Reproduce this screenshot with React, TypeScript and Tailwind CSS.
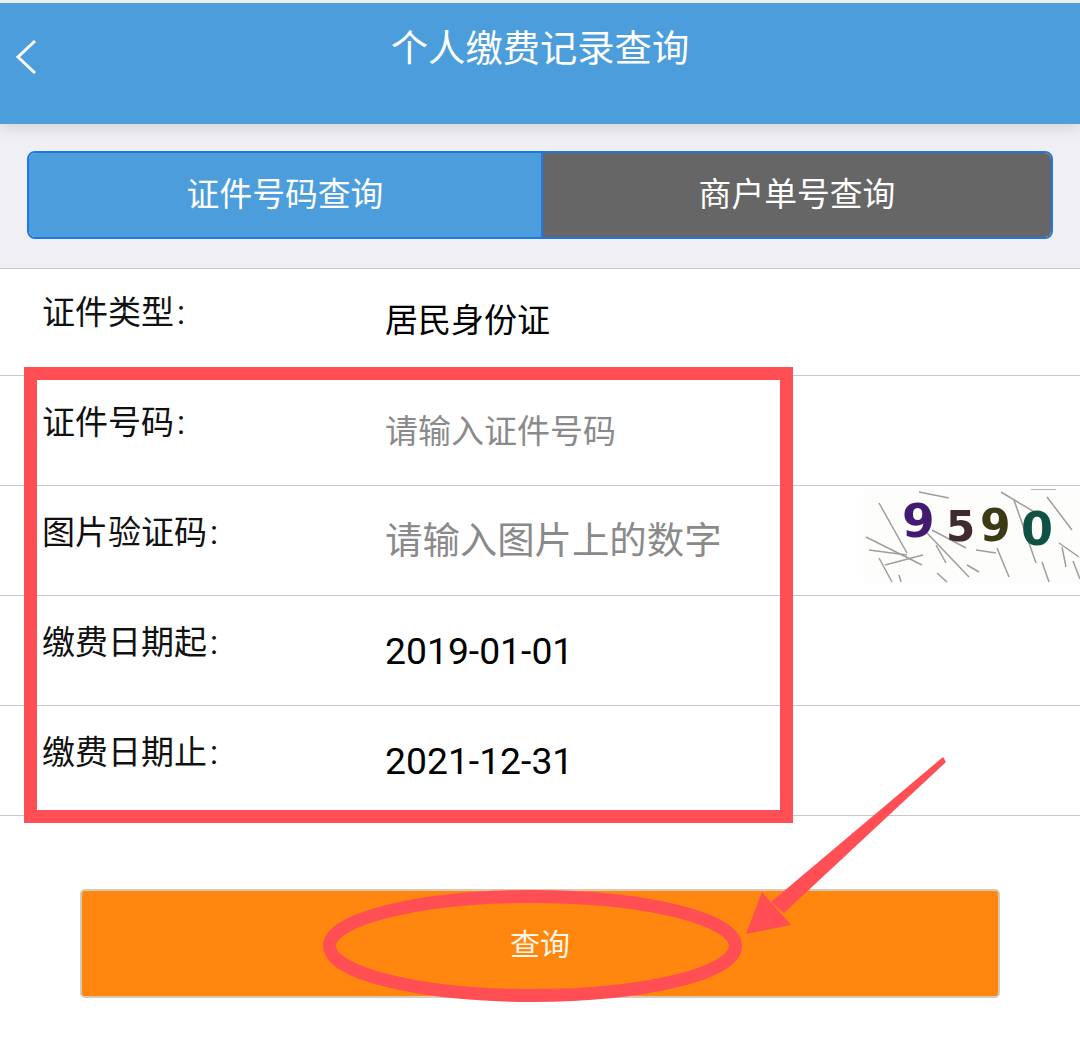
const cjk = "font-['Roboto','Noto_Sans_CJK_SC',sans-serif]";

function Row({ label, pad, h, children }: { label: string; pad: string; h: string; children: React.ReactNode }) {
  return (
    <div className={`relative flex border-b border-[#c8c8c8] ${h}`}>
      <div className={`w-[385px] shrink-0 pl-[42px] text-[33px] leading-[40px] text-[#111111] ${pad}`}>
        {label}
        <span className="ml-[3px]">:</span>
      </div>
      <div className="min-w-0 flex-1">{children}</div>
    </div>
  );
}

function Captcha() {
  const lines = [
    "M16 14L44 64", "M56 3L86 9", "M3 48L59 76", "M6 61L44 66", "M16 69L29 93", "M64 44L106 88", "M69 41L103 59", "M73 56L83 74",
    "M113 61L133 64", "M134 59L146 88", "M104 76L116 83", "M74 84L84 93", "M138 3L173 24", "M151 11L173 74", "M184 8L209 41",
    "M179 73L186 93", "M196 54L216 68", "M199 58L203 78", "M168 0L193 0", "M22 76L60 66", "M36 86L38 93", "M210 72L217 90",
  ];
  return (
    <svg viewBox="0 0 217 94" className="absolute right-0 top-[3px] h-[94px] w-[217px] bg-[#fdfdfb] blur-[0.6px]">
      <g stroke="#8d8d8d" strokeWidth="1.5" fill="none" opacity="0.85">
        {lines.map((d) => (
          <path key={d} d={d} />
        ))}
      </g>
      <g fontFamily="'DejaVu Sans', sans-serif" fontWeight="700">
        <text x="39" y="48" fontSize="47" fill="#421a72">9</text>
        <text x="83" y="52" fontSize="42" fill="#3f2a2e">5</text>
        <text x="117" y="52" fontSize="44" fill="#3c3a16">9</text>
        <text x="158" y="56" fontSize="46" fill="#0f5245">0</text>
      </g>
    </svg>
  );
}

export default function App() {
  return (
    <div className={`relative h-[1064px] w-[1080px] overflow-hidden bg-white ${cjk}`}>
      <header className="relative z-10 flex h-[124px] items-start border-t-[3px] border-[#eeeeee] bg-[#4c9ddb] shadow-[0_4px_14px_rgba(0,0,0,0.12)]">
        <svg viewBox="0 0 24 36" className="absolute left-[15px] top-[36px] h-[36px] w-[24px]" fill="none" stroke="white" strokeWidth="3">
          <path d="M20 2L3 18L20 34" />
        </svg>
        <h1 className="w-full pt-[23px] text-center text-[37.3px] font-normal leading-[46px] text-white">个人缴费记录查询</h1>
      </header>

      <div className="h-[145px] border-b border-[#c8c8c8] bg-[#efeff4] px-[27px] pt-[27px]">
        <div className="flex h-[88px] overflow-hidden rounded-[8px] border-[2px] border-[#1f78e0] text-[32.8px] text-white">
          <div className="flex w-[514px] items-center justify-center border-r-[2px] border-[#1f78e0] bg-[#4c9ddb] pt-[2px]">证件号码查询</div>
          <div className="flex flex-1 items-center justify-center bg-[#666666] pt-[2px]">商户单号查询</div>
        </div>
      </div>

      <Row label="证件类型" pad="pt-[24px]" h="h-[107px]">
        <div className="pt-[29px] text-[33px] leading-[46px] text-black">居民身份证</div>
      </Row>
      <Row label="证件号码" pad="pt-[27px]" h="h-[110px]">
        <div className="pt-[33px] text-[33px] leading-[46px] text-[#8a8a8a]">请输入证件号码</div>
      </Row>
      <Row label="图片验证码" pad="pt-[27px]" h="h-[110px]">
        <div className="w-[337px] overflow-hidden whitespace-nowrap pt-[32px] text-[37.4px] leading-[46px] text-[#8a8a8a]">请输入图片上的数字</div>
        <Captcha />
      </Row>
      <Row label="缴费日期起" pad="pt-[27px]" h="h-[110px]">
        <div className="pt-[32px] text-[37.3px] leading-[46px] text-black">2019-01-01</div>
      </Row>
      <Row label="缴费日期止" pad="pt-[27px]" h="h-[110px]">
        <div className="pt-[32px] text-[37.3px] leading-[46px] text-black">2021-12-31</div>
      </Row>

      <div className="px-[80px] pt-[73px]">
        <button className="flex h-[109px] w-full items-center justify-center rounded-[5px] border-[2px] border-[#d8c8b4] bg-[#ff860f] pt-[2px] text-[30px] text-[#fff6e6]">查询</button>
      </div>

      <div className="absolute left-[24px] top-[367px] h-[456px] w-[769px] border-[13px] border-[#ff4f55]" />
      <svg viewBox="0 0 1080 1064" className="pointer-events-none absolute inset-0 h-[1064px] w-[1080px]" fill="none">
        <ellipse cx="532.5" cy="946" rx="203" ry="49.5" stroke="#ff4f55" strokeWidth="13" />
        <path d="M943 757L946 762L784 913L771 902Z" fill="#ff4f55" />
        <path d="M746 934L762 892L791 925Z" fill="#ff4f55" />
      </svg>
    </div>
  );
}
